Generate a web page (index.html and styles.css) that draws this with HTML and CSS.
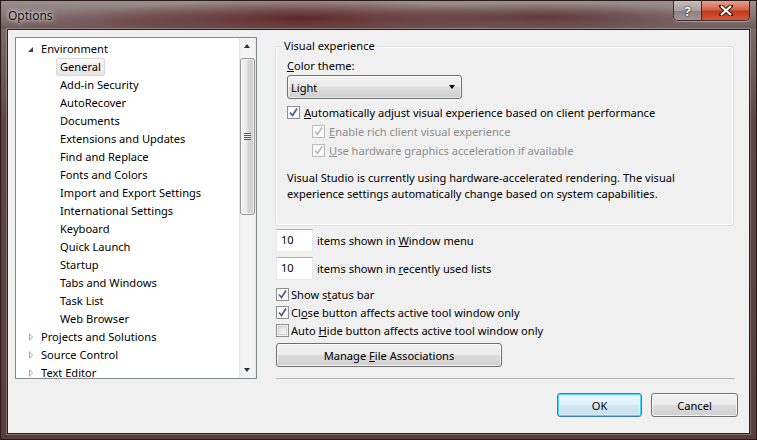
FILE: index.html
```html
<!DOCTYPE html>
<html lang="en">
<head>
  <meta charset="UTF-8" />
  <title>Options</title>
  <link rel="stylesheet" href="styles.css">
</head>
<body>
  <div class="window">
    <div class="titlebar">
      <span class="title">Options</span>
      <div class="caption">
        <span class="cap-help">?</span>
        <span class="cap-close">
          <svg width="14" height="11" viewBox="0 0 14 11"><path d="M2 1 L12 10 M12 1 L2 10" stroke="#3a1208" stroke-width="4" stroke-linecap="square"/><path d="M2 1 L12 10 M12 1 L2 10" stroke="#fff" stroke-width="2.2"/></svg>
        </span>
      </div>
    </div>

    <div class="client">
      <div class="main">
        <div class="tree">
          <ul class="tree-list">
            <li class="node"><span class="tw open"></span>Environment</li>
            <li class="leaf"><span class="sel">General</span></li>
            <li class="leaf"><span>Add-in Security</span></li>
            <li class="leaf"><span>AutoRecover</span></li>
            <li class="leaf"><span>Documents</span></li>
            <li class="leaf"><span>Extensions and Updates</span></li>
            <li class="leaf"><span>Find and Replace</span></li>
            <li class="leaf"><span>Fonts and Colors</span></li>
            <li class="leaf"><span>Import and Export Settings</span></li>
            <li class="leaf"><span>International Settings</span></li>
            <li class="leaf"><span>Keyboard</span></li>
            <li class="leaf"><span>Quick Launch</span></li>
            <li class="leaf"><span>Startup</span></li>
            <li class="leaf"><span>Tabs and Windows</span></li>
            <li class="leaf"><span>Task List</span></li>
            <li class="leaf"><span>Web Browser</span></li>
            <li class="node"><span class="tw"></span>Projects and Solutions</li>
            <li class="node"><span class="tw"></span>Source Control</li>
            <li class="node"><span class="tw"></span>Text Editor</li>
          </ul>
          <div class="vscroll">
            <div class="arrow up"></div>
            <div class="track">
              <div class="thumb"><span class="grip"></span></div>
            </div>
            <div class="arrow down"></div>
          </div>
        </div>

        <div class="page">
          <fieldset class="group">
            <legend>Visual experience</legend>
            <div class="label"><u>C</u>olor theme:</div>
            <div class="combo"><span>Light</span><span class="combo-arrow"></span></div>
            <div class="check-row first">
              <span class="cb on"><svg width="11" height="11" viewBox="0 0 11 11"><path d="M2 5.5 L4.5 8.5 L9 1.5" fill="none" stroke="#4a5f97" stroke-width="1.8"/></svg></span>
              <span><u>A</u>utomatically adjust visual experience based on client performance</span>
            </div>
            <div class="check-row sub dis">
              <span class="cb on"><svg width="11" height="11" viewBox="0 0 11 11"><path d="M2 5.5 L4.5 8.5 L9 1.5" fill="none" stroke="#b4b4b4" stroke-width="1.6"/></svg></span>
              <span><u>E</u>nable rich client visual experience</span>
            </div>
            <div class="check-row sub dis">
              <span class="cb on"><svg width="11" height="11" viewBox="0 0 11 11"><path d="M2 5.5 L4.5 8.5 L9 1.5" fill="none" stroke="#b4b4b4" stroke-width="1.6"/></svg></span>
              <span><u>U</u>se hardware graphics acceleration if available</span>
            </div>
            <p class="note">Visual Studio is currently using hardware-accelerated rendering. The visual experience settings automatically change based on system capabilities.</p>
          </fieldset>

          <div class="num-row">
            <span class="numbox">10</span>
            <span>items shown in <u>W</u>indow menu</span>
          </div>
          <div class="num-row">
            <span class="numbox">10</span>
            <span>items shown in <u>r</u>ecently used lists</span>
          </div>

          <div class="opts">
            <div class="check-row">
              <span class="cb on"><svg width="11" height="11" viewBox="0 0 11 11"><path d="M2 5.5 L4.5 8.5 L9 1.5" fill="none" stroke="#4a5f97" stroke-width="1.8"/></svg></span>
              <span>Show s<u>t</u>atus bar</span>
            </div>
            <div class="check-row">
              <span class="cb on"><svg width="11" height="11" viewBox="0 0 11 11"><path d="M2 5.5 L4.5 8.5 L9 1.5" fill="none" stroke="#4a5f97" stroke-width="1.8"/></svg></span>
              <span>Cl<u>o</u>se button affects active tool window only</span>
            </div>
            <div class="check-row">
              <span class="cb"></span>
              <span>Auto <u>H</u>ide button affects active tool window only</span>
            </div>
          </div>

          <button class="btn wide">Manage <u>F</u>ile Associations</button>
          <div class="sep"></div>
        </div>
      </div>

      <div class="footer">
        <button class="btn default">OK</button>
        <button class="btn cancel">Cancel</button>
      </div>
    </div>
  </div>
</body>
</html>
```

FILE: styles.css
```css
body {
  margin: 0;
  background: #2a1c1c;
  font-family: "Noto Sans", "Open Sans", sans-serif;
  font-size: 11.1px;
  color: #000;
}
.window {
  width: 757px;
  height: 440px;
  box-sizing: border-box;
  display: flex;
  flex-direction: column;
  background:
    linear-gradient(180deg, #8e8282 0px, #7a6a6a 30px, #5e4646 120px, #5a3c3c 440px);
  border: 1px solid #2a1a1a;
  padding: 0 6px 5px 6px;
}
.titlebar {
  height: 28px;
  display: flex;
  align-items: flex-start;
  margin: 0 -6px;
  padding: 0 6px;
  background:
    radial-gradient(ellipse 210px 18px at 300px 17px, rgba(90, 25, 25, 0.85), rgba(90, 25, 25, 0) 100%),
    radial-gradient(ellipse 180px 14px at 540px 16px, rgba(80, 30, 30, 0.7), rgba(80, 30, 30, 0) 100%),
    radial-gradient(ellipse 120px 16px at 130px 20px, rgba(110, 70, 70, 0.6), rgba(110, 70, 70, 0) 100%),
    linear-gradient(180deg, #9b8f90 0px, #8a7b7b 12px, #6e5b5b 28px);
}
.title {
  margin-top: 6px;
  margin-left: 1px;
  font-size: 12px;
  color: #111;
  text-shadow: 0 0 6px rgba(255, 255, 255, 0.9), 0 0 3px rgba(255, 255, 255, 0.8);
}
.caption {
  margin-left: auto;
  display: flex;
  height: 19px;
  border: 1px solid #3b2b2b;
  border-top: none;
  border-radius: 0 0 5px 5px;
  overflow: hidden;
  box-shadow: 0 1px 0 rgba(255, 255, 255, 0.35);
}
.cap-help {
  width: 27px;
  display: flex;
  justify-content: center;
  align-items: center;
  font-weight: bold;
  font-size: 13px;
  color: #fff;
  text-shadow: 0 0 2px #222, 0 0 1px #000;
  background: linear-gradient(180deg, #c8bfbf 0%, #a89c9c 50%, #8d7f7f 51%, #a39696 100%);
  border-right: 1px solid #3b2b2b;
}
.cap-close {
  width: 47px;
  display: flex;
  justify-content: center;
  align-items: center;
  background: linear-gradient(180deg, #e5a08f 0%, #d0644a 45%, #c0391d 55%, #d4583a 100%);
}
.client {
  flex: 1;
  background: #f0f0f0;
  border: 1px solid #2b1e1e;
  box-shadow: 0 0 0 1px rgba(255, 255, 255, 0.25);
  padding: 7px 11px 0 7px;
  display: flex;
  flex-direction: column;
}
.main {
  height: 342px;
  display: flex;
  gap: 18px;
}
.tree {
  width: 242px;
  box-sizing: border-box;
  border: 1px solid #828790;
  background: #fff;
  display: flex;
  overflow: hidden;
}
.tree-list {
  list-style: none;
  margin: 0;
  padding: 2px 0 0 0;
  flex: 1;
  overflow: hidden;
}
.tree-list li {
  height: 18px;
  line-height: 18px;
  white-space: nowrap;
}
.node {
  padding-left: 6px;
  display: flex;
  align-items: center;
}
.tw {
  width: 13px;
  height: 18px;
  position: relative;
  margin-right: 6px;
}
.tw::before {
  content: "";
  position: absolute;
  left: 7px;
  top: 5px;
  width: 0;
  height: 0;
  border-top: 4px solid transparent;
  border-bottom: 4px solid transparent;
  border-left: 4px solid #a6a6a6;
}
.tw::after {
  content: "";
  position: absolute;
  left: 8px;
  top: 7px;
  width: 0;
  height: 0;
  border-top: 2px solid transparent;
  border-bottom: 2px solid transparent;
  border-left: 2px solid #fff;
}
.tw.open::before {
  left: 6px;
  top: 7px;
  border: none;
  border-bottom: 5px solid #404040;
  border-left: 5px solid transparent;
}
.tw.open::after {
  display: none;
}
.leaf {
  padding-left: 40px;
}
.leaf span {
  display: inline-block;
  height: 16px;
  line-height: 16px;
  padding: 0 3px;
  border: 1px solid transparent;
}
.leaf .sel {
  border-color: #d9d9d9;
  border-radius: 2px;
  background: linear-gradient(180deg, #f8f8f8, #e5e5e5);
}
.vscroll {
  width: 17px;
  display: flex;
  flex-direction: column;
  background: linear-gradient(90deg, #e3e3e3 0, #f4f4f4 2px, #f2f2f2 15px, #e8e8e8 17px);
}
.arrow {
  height: 17px;
  position: relative;
}
.arrow::after {
  content: "";
  position: absolute;
  left: 5px;
  width: 0;
  height: 0;
  border-left: 3.5px solid transparent;
  border-right: 3.5px solid transparent;
}
.arrow.up::after {
  top: 6px;
  border-bottom: 4px solid #303030;
}
.arrow.down::after {
  top: 7px;
  border-top: 4px solid #303030;
}
.track {
  flex: 1;
  padding-top: 3px;
}
.thumb {
  height: 157px;
  margin: 0 1px;
  border: 1px solid #959595;
  border-radius: 3px;
  box-sizing: border-box;
  background: linear-gradient(90deg, #f3f3f3 0%, #e8e8e8 45%, #d6d6d6 55%, #cfcfcf 100%);
  box-shadow: inset 0 0 0 1px rgba(255, 255, 255, 0.7);
  display: flex;
  justify-content: center;
  align-items: center;
}
.grip {
  width: 7px;
  height: 7px;
  background: repeating-linear-gradient(180deg, #5b5b5b 0 1px, #eee 1px 2px);
}
.page {
  flex: 1;
  display: flex;
  flex-direction: column;
  padding-top: 1px;
}
.group {
  margin: 0;
  width: 459px;
  box-sizing: border-box;
  border: 1px solid #d5dfe5;
  border-radius: 3px;
  box-shadow: inset 0 0 0 1px #fff;
  padding: 4px 10px 23px 11px;
}
.group legend {
  padding: 0 1px 0 2px;
  margin-left: -5px;
  line-height: 16px;
}
.label {
  line-height: 16px;
}
.label u, .check-row u, .num-row u, .btn u {
  text-underline-offset: 1px;
}
.combo {
  margin-top: 1px;
  width: 175px;
  height: 24px;
  box-sizing: border-box;
  border: 1px solid #707070;
  border-radius: 3px;
  background: linear-gradient(180deg, #f2f2f2 0%, #ebebeb 50%, #dddddd 50%, #cfcfcf 100%);
  box-shadow: inset 0 0 0 1px rgba(255, 255, 255, 0.6);
  display: flex;
  align-items: center;
  padding-left: 3px;
}
.combo-arrow {
  margin-left: auto;
  margin-right: 6px;
  width: 0;
  height: 0;
  border-left: 3.5px solid transparent;
  border-right: 3.5px solid transparent;
  border-top: 4px solid #000;
}
.check-row {
  height: 19px;
  display: flex;
  align-items: center;
  gap: 4px;
}
.check-row.first {
  margin-top: 4px;
}
.check-row.sub {
  padding-left: 25px;
}
.check-row.dis {
  color: #8d8d8d;
}
.cb {
  width: 13px;
  height: 13px;
  box-sizing: border-box;
  border: 1px solid #8e8f8f;
  background: linear-gradient(135deg, #dcdcdc, #fcfcfc);
  box-shadow: inset 0 0 0 1px #f4f4f4, inset 0 0 0 2px #cfcfcf;
  display: flex;
  justify-content: center;
  align-items: center;
  flex: none;
}
.cb.on {
  background: #fff;
  box-shadow: inset 0 0 0 1px #f4f4f4;
}
.dis .cb {
  border-color: #bcbcbc;
}
.note {
  margin: 10px 0 0 0;
  line-height: 16px;
  width: 420px;
}
.num-row {
  margin-top: 3px;
  height: 23px;
  display: flex;
  align-items: center;
  gap: 4px;
  padding-left: 1px;
}
.num-row + .num-row {
  margin-top: 5px;
}
.numbox {
  width: 37px;
  height: 23px;
  box-sizing: border-box;
  background: #fff;
  border: 1px solid #e3e9ef;
  border-top-color: #abadb3;
  padding-left: 4px;
  line-height: 20px;
}
.opts {
  margin-top: 5px;
  padding-left: 1px;
}
.opts .check-row {
  height: 18px;
  gap: 2px;
}
.btn {
  font: inherit;
  color: #000;
  height: 24px;
  box-sizing: border-box;
  border: 1px solid #707070;
  border-radius: 3px;
  background: linear-gradient(180deg, #f2f2f2 0%, #ebebeb 50%, #dddddd 50%, #cfcfcf 100%);
  box-shadow: inset 0 0 0 1px rgba(255, 255, 255, 0.7);
  padding: 0;
}
.btn.wide {
  margin-top: 4px;
  margin-left: 1px;
  width: 226px;
}
.sep {
  margin-top: auto;
  margin-left: 1px;
  width: 459px;
  height: 1px;
  background: #b4b4b4;
}
.footer {
  margin-top: 14px;
  display: flex;
  justify-content: flex-end;
  gap: 9px;
}
.btn.default {
  width: 85px;
  border-color: #3c7fb1;
  background: linear-gradient(180deg, #eef7fc 0%, #e1f0f9 50%, #d2e7f4 50%, #c6e0f0 100%);
  box-shadow: inset 0 0 0 1px #48d8fb, inset 0 0 0 2px rgba(255, 255, 255, 0.4);
}
.btn.cancel {
  width: 87px;
}
```
